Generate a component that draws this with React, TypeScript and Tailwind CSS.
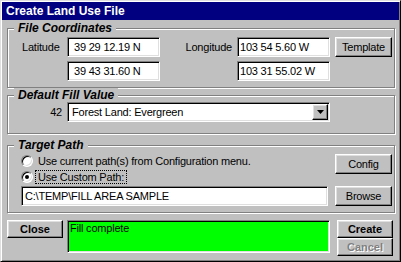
import React from "react";

const sunken =
  "border border-t-[#808080] border-l-[#808080] border-b-white border-r-white shadow-[inset_1px_1px_0_#000,inset_-1px_-1px_0_#dfdfdf]";
const raised =
  "border border-t-white border-l-white border-b-black border-r-black shadow-[inset_-1px_-1px_0_#808080,inset_1px_1px_0_#dfdfdf]";
const group = "border border-[#808080] shadow-[inset_1px_1px_0_#fff,1px_1px_0_#fff]";
const legend =
  "ml-[6px] px-[4px] h-[14px] leading-[14px] text-[12px] font-bold italic tracking-normal bg-[#c0c0c0] text-black";

function Button({ label, className = "", bold = false, disabled = false }: { label: string; className?: string; bold?: boolean; disabled?: boolean }) {
  return (
    <div
      className={`${raised} bg-[#c0c0c0] flex items-center justify-center text-[11px] ${bold ? "font-bold tracking-normal" : ""} ${
        disabled ? "text-[#808080] [text-shadow:1px_1px_0_#fff]" : "text-black"
      } ${className}`}
    >
      {label}
    </div>
  );
}

function Field({ value, className = "", pad = "pl-[2px]" }: { value: string; className?: string; pad?: string }) {
  return (
    <div className={`${sunken} bg-white h-[20px] flex items-center text-[11px] text-black ${pad} ${className}`}>
      {value}
    </div>
  );
}

function Radio({ checked }: { checked?: boolean }) {
  return (
    <span className="w-[12px] h-[12px] rounded-full bg-white border border-t-[#808080] border-l-[#808080] border-b-white border-r-white shadow-[inset_1px_1px_0_#000,inset_-1px_-1px_0_#dfdfdf] flex items-center justify-center shrink-0">
      {checked && <span className="w-[4px] h-[4px] rounded-full bg-black" />}
    </span>
  );
}

export default function App() {
  return (
    <div className="w-[401px] h-[262px] bg-[#c0c0c0] border border-t-[#dfdfdf] border-l-[#dfdfdf] border-b-black border-r-black shadow-[inset_1px_1px_0_#fff,inset_-1px_-1px_0_#808080] p-[1px] font-['Liberation_Sans',Arial,sans-serif] text-[11px] tracking-[-0.2px] text-black overflow-hidden">
      <div className="h-[18px] bg-[#000080] text-white font-bold text-[12px] tracking-normal leading-[18px] pl-[4px]">
        Create Land Use File
      </div>
      <div className="pl-[5px] pr-[4px] flex flex-col">
        {/* File Coordinates */}
        <fieldset className={`${group} mt-[1px]`}>
          <legend className={legend}>File Coordinates</legend>
          <div className="pt-[2px] pb-[6px] pl-[14px] flex flex-col gap-[4px]">
            <div className="flex items-center">
              <div className="w-[45px]">Latitude</div>
              <Field value="39 29 12.19 N" className="w-[93px]" pad="pl-[6px]" />
              <div className="w-[77px] text-right pr-[5px]">Longitude</div>
              <Field value="103 54 5.60 W" className="w-[93px]" />
              <Button label="Template" className="ml-[5px] w-[57px] h-[20px]" />
            </div>
            <div className="flex items-center">
              <div className="w-[45px]" />
              <Field value="39 43 31.60 N" className="w-[93px]" pad="pl-[6px]" />
              <div className="w-[77px]" />
              <Field value="103 31 55.02 W" className="w-[93px]" />
            </div>
          </div>
        </fieldset>

        {/* Default Fill Value */}
        <fieldset className={`${group} mt-0`}>
          <legend className={legend}>Default Fill Value</legend>
          <div className="pt-0 pb-[11px] flex items-center">
            <div className="w-[59px] text-right pr-[5px]">42</div>
            <div className={`${sunken} bg-white w-[263px] h-[20px] flex items-center`}>
              <div className="flex-1 pl-[4px]">Forest Land: Evergreen</div>
              <div className={`${raised} bg-[#c0c0c0] w-[16px] h-[16px] flex items-center justify-center mr-[1px]`}>
                <svg width="7" height="4" viewBox="0 0 7 4">
                  <path d="M0 0h7L3.5 4z" fill="#000" />
                </svg>
              </div>
            </div>
          </div>
        </fieldset>

        {/* Target Path */}
        <fieldset className={`${group} mt-[4px]`}>
          <legend className={legend}>Target Path</legend>
          <div className="pt-[1px] pb-[6px] pl-[13px] flex">
            <div className="w-[314px] flex flex-col">
              <div className="h-[16px] flex items-center">
                <Radio />
                <span className="ml-[2px] px-[2px] border border-transparent leading-[12px]">
                  Use current path(s) from Configuration menu.
                </span>
              </div>
              <div className="h-[16px] flex items-center">
                <Radio checked />
                <span className="ml-[2px] px-[2px] border border-dotted border-black leading-[12px]">
                  Use Custom Path:
                </span>
              </div>
              <Field value="C:\TEMP\FILL AREA SAMPLE" className="mt-[1px] w-[307px]" pad="pl-[3px]" />
            </div>
            <div className="w-[57px] flex flex-col">
              <Button label="Config" className="mt-[1px] h-[20px]" />
              <Button label="Browse" className="mt-[12px] h-[20px]" />
            </div>
          </div>
        </fieldset>

        {/* Bottom row */}
        <div className="mt-[7px] flex items-start">
          <Button label="Close" bold className="w-[56px] h-[18px]" />
          <div className={`${sunken} bg-[#00ff00] ml-[4px] w-[263px] h-[33px] pl-[2px] pt-[1px] leading-[13px]`}>
            Fill complete
          </div>
          <div className="ml-[7px] w-[56px] flex flex-col">
            <Button label="Create" bold className="h-[18px]" />
            <Button label="Cancel" bold disabled className="h-[18px]" />
          </div>
        </div>
      </div>
    </div>
  );
}
